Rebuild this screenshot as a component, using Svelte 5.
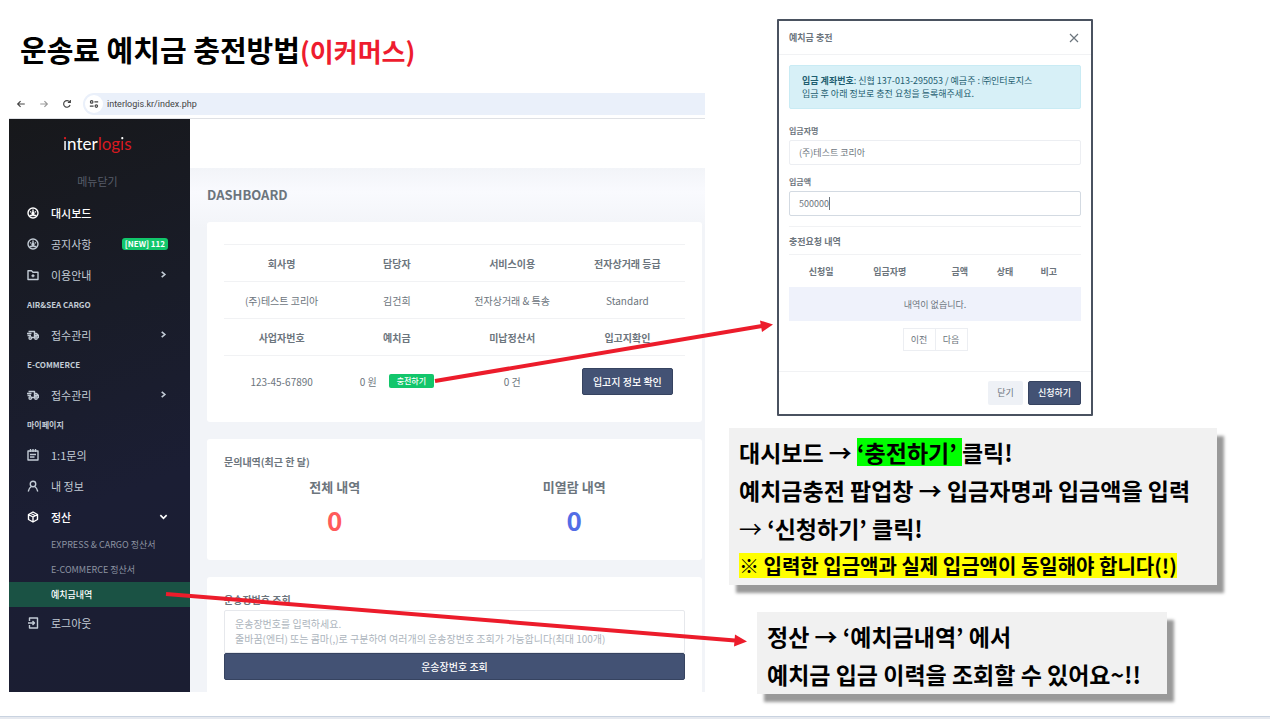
<script lang="ts">
  // Guide slide: how to top up the shipping deposit (e-commerce customers).
  // Left is the dashboard, right is the top-up dialog and the two notes.

  type IconName = 'dial' | 'folder' | 'truck' | 'note' | 'user' | 'box' | 'exit';

  interface MenuItem {
    label: string;
    icon?: IconName;
    heading?: boolean;
    strong?: boolean;
    badge?: string;
    chevron?: 'right' | 'down';
    children?: { label: string; active?: boolean }[];
  }

  const menu: MenuItem[] = [
    { label: '대시보드', icon: 'dial', strong: true },
    { label: '공지사항', icon: 'dial', badge: '[NEW] 112' },
    { label: '이용안내', icon: 'folder', chevron: 'right' },
    { label: 'AIR&SEA CARGO', heading: true },
    { label: '접수관리', icon: 'truck', chevron: 'right' },
    { label: 'E-COMMERCE', heading: true },
    { label: '접수관리', icon: 'truck', chevron: 'right' },
    { label: '마이페이지', heading: true },
    { label: '1:1문의', icon: 'note' },
    { label: '내 정보', icon: 'user' },
    {
      label: '정산',
      icon: 'box',
      strong: true,
      chevron: 'down',
      children: [
        { label: 'EXPRESS & CARGO 정산서' },
        { label: 'E-COMMERCE 정산서' },
        { label: '예치금내역', active: true },
      ],
    },
    { label: '로그아웃', icon: 'exit' },
  ];

  const historyColumns = ['신청일', '입금자명', '금액', '상태', '비고'];

  let depositor = $state('(주)테스트 코리아');
  let amount = $state('500000');
  let waybills = $state('');
</script>

{#snippet icon(name: IconName)}
  <svg
    class="icon"
    viewBox="0 0 24 24"
    fill="none"
    stroke="currentColor"
    stroke-width="2.8"
    stroke-linejoin="round"
    aria-hidden="true"
  >
    {#if name === 'dial'}
      <circle cx="12" cy="12" r="10" />
      <path d="M12 5v8M6 9l2.500 1.500M18 9l-2.500 1.500M5 17h5l2-3 2 3h5" />
      <circle cx="12" cy="13" r="2" fill="currentColor" />
    {:else if name === 'folder'}
      <path d="M2 3.500h7l3 3h10V21H2z" />
      <path d="M12 10.500v6M9 13.500h6" />
    {:else if name === 'truck'}
      <path d="M3 5h12v12H9M15 9h4l4 4v4h-2M0 9h9M1 13h7M15 13h7" />
      <circle cx="6.500" cy="18" r="2.500" />
      <circle cx="18" cy="18" r="2.500" />
    {:else if name === 'note'}
      <path d="M2 4h20v18H2zM7 0v6M12 0v6M17 0v6M6 11h12M6 16h9" />
    {:else if name === 'user'}
      <circle cx="12" cy="8" r="5.500" />
      <path d="M2.500 23c1-5 3-8 6-10M21.500 23c-1-5-3-8-6-10" />
    {:else if name === 'box'}
      <path d="M12 2l9 5v10l-9 5-9-5V7zM3 7l9 5 9-5M12 12v10M7.500 4.500l9 5" />
    {:else}
      <path d="M5 8V2h16v20H5v-6M2 12h13M11 8l4 4-4 4" />
    {/if}
  </svg>
{/snippet}

{#snippet chevron(dir: 'right' | 'down')}
  <svg class="chevron" viewBox="0 0 10 10" fill="none" stroke="currentColor" stroke-width="1.8" aria-hidden="true">
    <path d={dir === 'right' ? 'M3 2l3.500 3L3 8' : 'M1.500 3.500L5 7l3.500-3.500'} />
  </svg>
{/snippet}

<div class="slide">
  <div class="columns">
    <section class="left">
      <h1>운송료 예치금 충전방법<span>(이커머스)</span></h1>

      <div class="browser">
        <div class="toolbar">
          <button type="button" aria-label="뒤로">
            <svg viewBox="0 0 12 12" fill="none" stroke="currentColor" stroke-width="1.4"><path d="M10.500 6H2M5.500 2.500L2 6l3.500 3.500" /></svg>
          </button>
          <button type="button" class="dim" aria-label="앞으로">
            <svg viewBox="0 0 12 12" fill="none" stroke="currentColor" stroke-width="1.4"><path d="M1.500 6H10M6.500 2.500L10 6 6.500 9.500" /></svg>
          </button>
          <button type="button" aria-label="새로고침">
            <svg viewBox="0 0 12 12" fill="none" stroke="currentColor" stroke-width="1.4"><path d="M9.700 7.300A4 4 0 1 1 9.200 3.500M10 1.200v3H7" /></svg>
          </button>
          <div class="address">
            <span class="site">
              <svg viewBox="0 0 12 12" fill="none" stroke="currentColor" stroke-width="1.4" aria-hidden="true">
                <circle cx="3.200" cy="3.500" r="1.500" /><path d="M6.500 3.500H11M1 8.500h4.500" /><circle cx="8.800" cy="8.500" r="1.500" />
              </svg>
            </span>
            <span>interlogis.kr/index.php</span>
          </div>
        </div>

        <div class="app">
          <nav class="sidebar">
            <div class="logo"><span class="red-dot">i</span>nter<b>log<span class="white-dot">i</span>s</b></div>
            <button type="button" class="fold">메뉴닫기</button>
            {#each menu as item}
              {#if item.heading}
                <div class="heading">{item.label}</div>
              {:else}
                <a class="item" class:strong={item.strong} href="#menu">
                  {#if item.icon}{@render icon(item.icon)}{/if}
                  <span class="label">{item.label}</span>
                  {#if item.badge}<span class="badge">{item.badge}</span>{/if}
                  {#if item.chevron}{@render chevron(item.chevron)}{/if}
                </a>
                {#each item.children ?? [] as child}
                  <a class="sub" class:active={child.active} href="#menu">{child.label}</a>
                {/each}
              {/if}
            {/each}
          </nav>

          <main>
            <div class="topbar"></div>
            <div class="content">
              <h2>DASHBOARD</h2>

              <div class="card">
                <table class="account">
                  <tbody>
                    <tr><th>회사명</th><th>담당자</th><th>서비스이용</th><th>전자상거래 등급</th></tr>
                    <tr><td>(주)테스트 코리아</td><td>김건희</td><td>전자상거래 &amp; 특송</td><td>Standard</td></tr>
                    <tr><th>사업자번호</th><th>예치금</th><th>미납정산서</th><th>입고지확인</th></tr>
                    <tr class="last">
                      <td>123-45-67890</td>
                      <td><span class="balance">0 원 <button type="button" class="charge">충전하기</button></span></td>
                      <td>0 건</td>
                      <td><button type="button" class="primary">입고지 정보 확인</button></td>
                    </tr>
                  </tbody>
                </table>
              </div>

              <div class="card">
                <h3>문의내역(최근 한 달)</h3>
                <div class="counts">
                  <div><h4>전체 내역</h4><strong class="total">0</strong></div>
                  <div><h4>미열람 내역</h4><strong class="unread">0</strong></div>
                </div>
              </div>

              <div class="card cut">
                <h3><label for="waybills">운송장번호 조회</label></h3>
                <textarea
                  id="waybills"
                  bind:value={waybills}
                  placeholder={'운송장번호를 입력하세요.\n줄바꿈(엔터) 또는 콤마(,)로 구분하여 여러개의 운송장번호 조회가 가능합니다(최대 100개)'}
                ></textarea>
                <button type="button" class="primary wide">운송장번호 조회</button>
              </div>
            </div>
          </main>
        </div>
      </div>
    </section>

    <section class="right">
      <div class="dialog" role="dialog" aria-labelledby="dialog-title">
        <header>
          <h5 id="dialog-title">예치금 충전</h5>
          <button type="button" class="close" aria-label="닫기">
            <svg viewBox="0 0 10 10" fill="none" stroke="currentColor" stroke-width="1.2"><path d="M1 1l8 8M9 1L1 9" /></svg>
          </button>
        </header>
        <div class="body">
          <p class="alert">
            <b>입금 계좌번호</b>: 신협 137-013-295053 / 예금주 : ㈜인터로지스<br />입금 후 아래 정보로 충전 요청을 등록해주세요.
          </p>
          <label for="depositor">입금자명</label>
          <input id="depositor" type="text" bind:value={depositor} />
          <label for="amount">입금액</label>
          <input id="amount" class="editing" type="text" bind:value={amount} />
          <h6>충전요청 내역</h6>
          <table class="history">
            <thead>
              <tr>{#each historyColumns as column}<th>{column}</th>{/each}</tr>
            </thead>
            <tbody>
              <tr><td colspan="5">내역이 없습니다.</td></tr>
            </tbody>
          </table>
          <div class="pager">
            <button type="button">이전</button>
            <button type="button">다음</button>
          </div>
        </div>
        <footer>
          <button type="button" class="light">닫기</button>
          <button type="button" class="primary">신청하기</button>
        </footer>
      </div>

      <div class="note">
        <p>대시보드 → <mark class="green">{'‘충전하기’ '}</mark>클릭!</p>
        <p>예치금충전 팝업창 → 입금자명과 입금액을 입력</p>
        <p><span class="thin">→</span> ‘신청하기’ 클릭!</p>
        <p class="warning"><mark>※ 입력한 입금액과 실제 입금액이 동일해야 합니다(!)</mark></p>
      </div>

      <div class="note second">
        <p>정산 → ‘예치금내역’ 에서</p>
        <p>예치금 입금 이력을 조회할 수 있어요~!!</p>
      </div>
    </section>
  </div>

  <div class="edge"></div>

  <!-- red pointers from the two controls to their explanation -->
  <svg class="pointers" viewBox="0 0 1270 719" preserveAspectRatio="none" aria-hidden="true">
    <path d="M435 381L762 326M166 594L735 640.500" />
    <polygon points="773,324.500 760,320.500 762,332" />
    <polygon points="747,641.500 735,634.500 734,646.500" />
  </svg>
</div>

<style>
  :global(body) {
    margin: 0;
    background: #fff;
  }
  .slide {
    position: relative;
    min-height: 100vh;
    display: flex;
    flex-direction: column;
    font-family: 'Noto Sans CJK KR', sans-serif;
    color: #000;
    overflow: hidden;
  }
  h1,
  h2,
  h3,
  h4,
  h5,
  h6,
  p {
    margin: 0;
  }
  button {
    font: inherit;
    padding: 0;
    border: 0;
    background: none;
    color: inherit;
    cursor: pointer;
  }
  a {
    color: inherit;
    text-decoration: none;
  }
  .columns {
    flex: 1;
    display: grid;
    grid-template-columns: minmax(0, 705fr) minmax(0, 565fr);
  }
  h1 {
    padding: 29px 0 20px 20px;
    font-size: 29px;
    line-height: 40px;
    font-weight: 700;
    white-space: nowrap;
  }
  h1 span {
    color: #ee1c2e;
    font-size: 26px;
  }

  /* browser frame */
  .browser {
    padding-left: 9px;
  }
  .toolbar {
    display: flex;
    align-items: center;
    height: 25px;
    padding-bottom: 2px;
    border-bottom: 1px solid #dfe1e5;
    color: #444;
  }
  .toolbar button {
    width: 23px;
    height: 23px;
  }
  .toolbar svg {
    display: block;
    width: 10px;
    height: 10px;
    margin: auto;
  }
  .toolbar .dim {
    color: #999;
  }
  .address {
    flex: 1;
    display: flex;
    align-items: center;
    gap: 4px;
    height: 22px;
    margin-left: 5px;
    padding-left: 2px;
    border-radius: 11px 0 0 11px;
    background: #eaf0fa;
    font-family: Roboto, sans-serif;
    font-size: 9px;
  }
  .site {
    display: flex;
    width: 18px;
    height: 18px;
    border-radius: 50%;
    background: #fff;
  }

  .app {
    display: grid;
    grid-template-columns: 181px minmax(0, 1fr);
  }
  .sidebar {
    background: linear-gradient(160deg, #17181b, #191c28 35%, #1b1e34 65%, #1b1e32);
    color: #c3ccd6;
    font-size: 11px;
    padding-bottom: 48px;
  }
  .logo {
    padding: 13px 0 12px 54px;
    font-family: Lato, sans-serif;
    font-size: 17px;
    line-height: 24px;
    color: #fff;
  }
  .logo b {
    font-weight: 400;
    color: #d71920;
  }
  .logo span {
    color: transparent;
    background-clip: text;
    -webkit-background-clip: text;
  }
  .red-dot {
    background-image: linear-gradient(#e11b22 38%, #fff 38%);
  }
  .white-dot {
    background-image: linear-gradient(#fff 38%, #d71920 38%);
  }
  .fold {
    display: block;
    width: 100%;
    height: 29px;
    padding: 0 4px 4px 0;
    color: #575d69;
  }
  .item {
    display: flex;
    align-items: center;
    height: 31px;
    padding: 0 22px 0 18px;
  }
  .strong {
    color: #fff;
    font-weight: 500;
  }
  .icon {
    width: 12px;
    height: 12px;
    margin-right: 12px;
  }
  .label {
    flex: 1;
  }
  .badge {
    padding: 0 3px;
    border-radius: 3px;
    background: #12c66b;
    color: #fff;
    font-size: 8px;
    line-height: 12px;
    font-weight: 700;
  }
  .chevron {
    width: 9px;
    height: 9px;
  }
  .heading {
    padding-left: 18px;
    font-size: 8px;
    line-height: 29px;
    font-weight: 700;
  }
  .sub {
    display: block;
    padding-left: 42px;
    font-size: 9px;
    line-height: 25px;
    color: #8c93a1;
  }
  .active {
    background: #1a5244;
    color: #fff;
    font-weight: 500;
  }

  main {
    display: flex;
    flex-direction: column;
    color: #6c757d;
    font-size: 10px;
  }
  .topbar {
    height: 49px;
    background: #fff;
  }
  .content {
    flex: 1;
    display: flex;
    flex-direction: column;
    gap: 17px;
    padding: 17px 3px 0 17px;
    background: linear-gradient(#f2f4f8, #f9fafe 24px, #f2f4f8 60px);
  }
  h2 {
    font-size: 13px;
    line-height: 20px;
    font-weight: 700;
  }
  .card {
    padding: 14px 17px 16px;
    border-radius: 3px;
    background: #fff;
  }
  .card:first-of-type {
    padding-top: 22px;
  }
  .cut {
    flex: 1;
    padding-bottom: 12px;
    border-radius: 3px 3px 0 0;
  }
  table {
    width: 100%;
    border-collapse: collapse;
    text-align: center;
  }
  th,
  td {
    padding: 0;
  }
  .account {
    table-layout: fixed;
  }
  .account th,
  .account td {
    height: 36px;
    border-top: 1px solid #f1f2f4;
    white-space: nowrap;
  }
  .account .last td {
    height: 50px;
  }
  .balance {
    display: flex;
    align-items: center;
    justify-content: center;
    gap: 12px;
  }
  .charge {
    padding: 0 8px;
    border-radius: 2px;
    background: #12c66b;
    color: #fff;
    font-size: 8px;
    line-height: 14px;
    font-weight: 500;
  }
  .primary {
    padding: 0 10px;
    border: 1px solid #364360;
    border-radius: 2px;
    background: #435274;
    color: #fff;
    font-weight: 500;
    line-height: 25px;
  }
  h3 {
    font-size: 10px;
    line-height: 18px;
    font-weight: 700;
  }
  .counts {
    display: grid;
    grid-template-columns: 1fr 1fr;
    margin: 4px -9px 2px;
    text-align: center;
  }
  h4 {
    font-size: 13px;
    line-height: 23px;
    font-weight: 700;
  }
  .counts strong {
    display: block;
    font-size: 26px;
    line-height: 44px;
    font-weight: 700;
  }
  .total {
    color: #ff5b5b;
  }
  .unread {
    color: #536de6;
  }
  textarea {
    display: block;
    box-sizing: border-box;
    width: 100%;
    height: 43px;
    margin-top: 1px;
    padding: 5px 10px;
    border: 1px solid #e6e8ec;
    border-radius: 2px 2px 0 0;
    resize: none;
    overflow: hidden;
    font: inherit;
    line-height: 15px;
    color: inherit;
  }
  textarea::placeholder {
    color: #adb5bd;
  }
  .wide {
    width: 100%;
  }

  /* right half */
  .right {
    padding: 19px 0 0 24px;
  }
  .dialog {
    box-sizing: border-box;
    width: 316px;
    max-width: 100%;
    margin-left: 48px;
    border: 2px solid #4a5260;
    border-radius: 1px;
    background: #fff;
    color: #6c757d;
    font-size: 9px;
  }
  .dialog header {
    display: flex;
    align-items: center;
    justify-content: space-between;
    height: 33px;
    padding: 0 12px 0 10px;
    border-bottom: 1px solid #f1f2f4;
  }
  h5 {
    font-size: 9px;
    font-weight: 700;
  }
  .close svg {
    display: block;
    width: 10px;
    height: 10px;
  }
  .body {
    padding: 10px 10px 20px;
  }
  .alert {
    margin-bottom: 15px;
    padding: 8px 12px;
    border: 1px solid #c9ebf4;
    border-radius: 2px;
    background: #d7f0f7;
    color: #1e5e70;
    line-height: 13px;
    white-space: nowrap;
  }
  .body label {
    display: block;
    font-size: 8px;
    line-height: 13px;
    font-weight: 700;
    padding-bottom: 3px;
  }
  .body input {
    display: block;
    box-sizing: border-box;
    width: 100%;
    height: 25px;
    margin-bottom: 10px;
    padding: 0 9px;
    border: 1px solid #eceef2;
    border-radius: 2px;
    font: inherit;
    color: inherit;
  }
  .body .editing {
    border-color: #d3dae2;
    /* text cursor after the typed amount */
    background: linear-gradient(#6c757d, #6c757d) 39px center / 1px 13px no-repeat;
  }
  h6 {
    padding: 5px 0 3px;
    border-top: 1px solid #f1f2f4;
    font-size: 9px;
    line-height: 19px;
    font-weight: 700;
  }
  .history {
    table-layout: fixed;
  }
  .history th {
    height: 32px;
    border-top: 1px solid #f1f2f4;
  }
  .history th:nth-child(1) {
    width: 22%;
  }
  .history th:nth-child(2) {
    width: 25%;
  }
  .history th:nth-child(3) {
    width: 23%;
  }
  .history th:nth-child(4) {
    width: 8%;
  }
  .history td {
    height: 34px;
    background: #eff2fb;
  }
  .pager {
    display: flex;
    justify-content: center;
    margin-top: 7px;
  }
  .pager button {
    width: 33px;
    height: 23px;
    border: 1px solid #eceef2;
  }
  .pager button + button {
    margin-left: -1px;
  }
  .dialog footer {
    display: flex;
    justify-content: flex-end;
    gap: 5px;
    padding: 9px 10px;
    border-top: 1px solid #f1f2f4;
  }
  .dialog footer button {
    line-height: 22px;
    padding: 0 9px;
  }
  .light {
    border-radius: 2px;
    background: #eef1f6;
  }

  .note {
    box-sizing: border-box;
    width: 488px;
    max-width: 100%;
    margin-top: 12px;
    padding: 5px 10px 0;
    background: #f1f1f1;
    box-shadow: 7px 8px 3px #999;
    font-size: 23px;
    line-height: 38px;
    font-weight: 700;
    white-space: nowrap;
  }
  .second {
    width: 410px;
    margin: 27px 0 0 28px;
    padding-bottom: 1px;
  }
  mark {
    display: inline-block;
    background: #ff0;
    color: inherit;
    line-height: 25px;
    white-space: pre;
  }
  .green {
    background: #0f0;
    line-height: 28px;
  }
  .thin {
    font-weight: 400;
  }
  .warning {
    font-size: 20px;
  }

  .edge {
    height: 2px;
    border-top: 1px solid #c9d3e0;
    background: #e6e9ef;
  }
  .pointers {
    position: absolute;
    inset: 0;
    width: 100%;
    height: 100%;
    fill: #ec1c2b;
    pointer-events: none;
  }
  .pointers path {
    fill: none;
    stroke: #ec1c2b;
    stroke-width: 4;
  }
</style>
